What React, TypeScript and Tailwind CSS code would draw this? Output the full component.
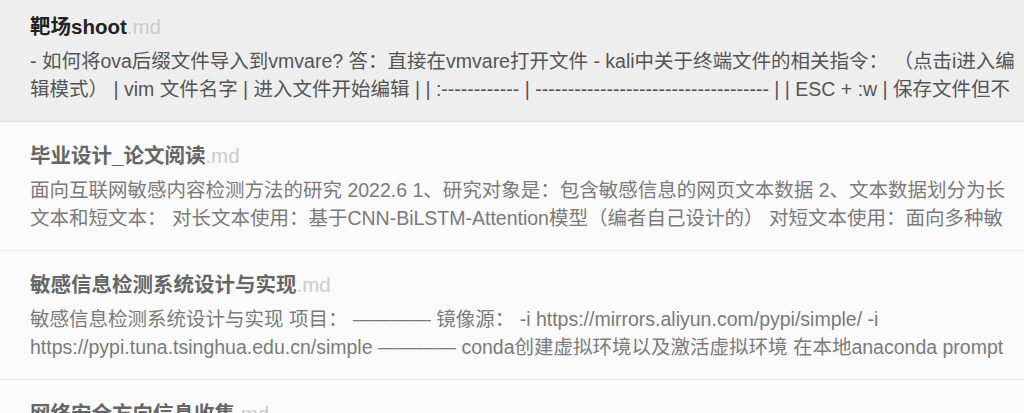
import React from 'react';

interface Note {
  title: string;
  excerpt: string;
}

const notes: Note[] = [
  {
    title: '靶场shoot',
    excerpt:
      '- 如何将ova后缀文件导入到vmvare? 答：直接在vmvare打开文件 - kali中关于终端文件的相关指令： （点击i进入编辑模式） | vim 文件名字 | 进入文件开始编辑 | | :------------ | ------------------------------------ | | ESC + :w | 保存文件但不退出 | | ESC + :q | 退出文件',
  },
  {
    title: '毕业设计_论文阅读',
    excerpt:
      '面向互联网敏感内容检测方法的研究 2022.6 1、研究对象是：包含敏感信息的网页文本数据 2、文本数据划分为长文本和短文本： 对长文本使用：基于CNN-BiLSTM-Attention模型（编者自己设计的） 对短文本使用：面向多种敏感信息的检测',
  },
  {
    title: '敏感信息检测系统设计与实现',
    excerpt:
      '敏感信息检测系统设计与实现 项目： ———— 镜像源： -i https://mirrors.aliyun.com/pypi/simple/ -i https://pypi.tuna.tsinghua.edu.cn/simple ———— conda创建虚拟环境以及激活虚拟环境 在本地anaconda prompt 中输入',
  },
  {
    title: '网络安全方向信息收集',
    excerpt: '信息收集 子域名 端口 目录 指纹识别 旁站 C段 真实IP',
  },
];

export default function App() {
  return (
    <div
      className="h-[413px] w-[1024px] overflow-hidden bg-[#fafafa]"
      style={{ fontFamily: '"Liberation Sans", "Noto Sans CJK SC", sans-serif' }}
    >
      <div className="-mt-[7px]">
        {notes.map((note, i) => {
          const active = i === 0;
          return (
            <div
              key={note.title}
              className={
                active
                  ? 'h-[129px] border-b border-[#e3e3e3] bg-[#eeeeee] pl-[30px] pr-[1px] pt-[21px]'
                  : 'h-[129px] border-b border-[#e8e8e8] bg-[#fafafa] pl-[30px] pr-[10px] pt-[21px]'
              }
            >
              <div className="h-[26px] text-[20.5px] leading-[26px] whitespace-nowrap">
                <span className={active ? 'font-bold text-[#222222]' : 'font-bold text-[#666666]'}>
                  {note.title}
                </span>
                <span className="text-[#cccccc]">.md</span>
              </div>
              <div
                className={
                  active
                    ? 'mt-[7px] h-[56px] overflow-hidden break-all text-[19.5px] leading-[28px] text-[#555555]'
                    : 'mt-[7px] h-[56px] overflow-hidden text-[19.5px] leading-[28px] text-[#7a7a7a]'
                }
              >
                {note.excerpt}
              </div>
            </div>
          );
        })}
      </div>
    </div>
  );
}
